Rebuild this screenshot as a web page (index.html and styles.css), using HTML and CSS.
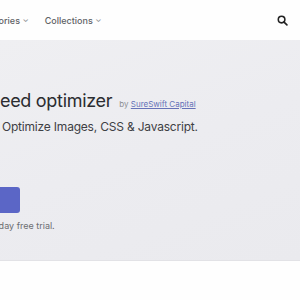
FILE: index.html
```html
<!DOCTYPE html>
<html>
<head>
<meta charset="utf-8">
<link rel="stylesheet" href="styles.css">
</head>
<body>
<header class="topbar">
  <nav class="nav">
    <span class="nav-item nav-cut">Categories <span class="chev">&#8964;</span></span>
    <span class="nav-item">Collections <span class="chev">&#8964;</span></span>
  </nav>
  <svg class="search" width="11" height="11" viewBox="0 0 12 12"><circle cx="5" cy="5" r="3.6" fill="none" stroke="#222" stroke-width="1.7"/><path d="M7.7 7.7 L10.8 10.8" stroke="#222" stroke-width="1.8" stroke-linecap="round"/></svg>
</header>
<section class="hero">
  <div class="title-row">
    <h1 class="title">Speed optimizer</h1>
    <span class="by">by <a class="dev">SureSwift Capital</a></span>
  </div>
  <p class="tagline">Optimize Images, CSS &amp; Javascript.</p>
  <div class="cta"><span class="btn">Add app</span></div>
  <p class="trial">14-day free trial.</p>
</section>
<main class="rest"></main>
</body>
</html>
```
FILE: styles.css
```css
html, body { margin: 0; padding: 0; }
body {
  width: 300px; height: 300px; overflow: hidden;
  background: #fefefe;
  font-family: Inter, "Noto Sans", sans-serif;
}
.topbar {
  height: 40px;
  display: flex; align-items: center; justify-content: space-between;
  background: #fefefe;
  padding-right: 12px;
}
.nav { display: flex; gap: 16px; align-items: center; margin-left: -27px; }
.nav-item { font-size: 9px; font-weight: 500; color: #5f6266; }
.chev { font-size: 8px; color: #8a8d90; position: relative; top: -2px; }
.search { display: block; }
.hero {
  height: 221px;
  background: linear-gradient(160deg, #efeff2 0%, #ececf0 50%, #eaeaee 100%);
  border-bottom: 1px solid #e2e2e6;
  box-sizing: border-box;
  padding-top: 47px;
  overflow: hidden;
}
.title-row { display: flex; align-items: baseline; gap: 7px; margin-left: -22px; }
.title { margin: 0; font-size: 18px; font-weight: 400; color: #2b2c30; letter-spacing: -0.3px; line-height: 28px; }
.by { font-size: 8px; color: #8c8e92; }
.dev { color: #6672b8; text-decoration: underline; }
.tagline { margin: 4px 0 0 2px; font-size: 12px; color: #3e4044; line-height: 16px; letter-spacing: -0.2px; }
.cta { margin: 52px 0 0 -100px; }
.btn {
  display: flex; align-items: center; justify-content: center;
  width: 120px; height: 26px; border-radius: 3px;
  background: #5b66c6; color: #fff; font-size: 12px;
}
.trial { margin: 7px 0 0 -15px; font-size: 9px; line-height: 11px; color: #6c6e72; }
```
